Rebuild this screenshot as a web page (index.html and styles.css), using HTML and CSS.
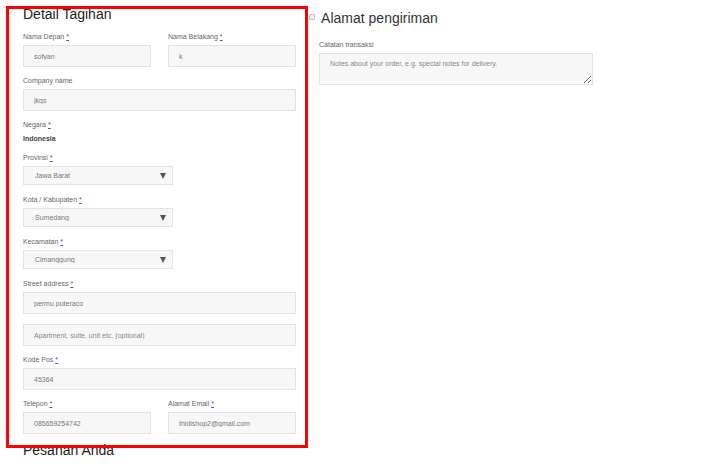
FILE: index.html
```html
<!DOCTYPE html>
<html>
<head>
  <title>Checkout</title>
  <link rel="stylesheet" href="styles.css">
</head>
<body>
  <div class="checkout">
    <div class="col-billing">
      <h3 class="section-title">Detail Tagihan</h3>

      <div class="row">
        <div class="field">
          <label>Nama Depan <a class="req">*</a></label>
          <input class="text" type="text" value="sofyan">
        </div>
        <div class="field">
          <label>Nama Belakang <a class="req">*</a></label>
          <input class="text" type="text" value="k">
        </div>
      </div>

      <div class="field">
        <label>Company name</label>
        <input class="text" type="text" value="jkgs">
      </div>

      <div class="field country">
        <label>Negara <a class="req">*</a></label>
        <strong>Indonesia</strong>
      </div>

      <div class="field select-field">
        <label>Provinsi <a class="req">*</a></label>
        <div class="select"><select><option>Jawa Barat</option></select></div>
      </div>

      <div class="field select-field">
        <label>Kota / Kabupaten <a class="req">*</a></label>
        <div class="select"><select><option>Sumedang</option></select></div>
      </div>

      <div class="field select-field">
        <label>Kecamatan <a class="req">*</a></label>
        <div class="select"><select><option>Cimanggung</option></select></div>
      </div>

      <div class="field">
        <label>Street address <a class="req">*</a></label>
        <input class="text" type="text" value="permu puteraco">
        <input class="text second" type="text" placeholder="Apartment, suite, unit etc. (optional)">
      </div>

      <div class="field">
        <label>Kode Pos <a class="req">*</a></label>
        <input class="text" type="text" value="45364">
      </div>

      <div class="row">
        <div class="field">
          <label>Telepon <a class="req">*</a></label>
          <input class="text" type="text" value="085659254742">
        </div>
        <div class="field">
          <label>Alamat Email <a class="req">*</a></label>
          <input class="text" type="text" value="thidishop2@gmail.com">
        </div>
      </div>

      <h3 class="section-title order-title">Pesanan Anda</h3>
    </div>

    <div class="col-shipping">
      <h3 class="section-title ship-title"><input class="ship-check" type="checkbox"> Alamat pengiriman</h3>
      <div class="field">
        <label>Catatan transaksi</label>
        <textarea placeholder="Notes about your order, e.g. special notes for delivery."></textarea>
      </div>
    </div>
  </div>

  <!-- highlight box drawn over the billing form -->
  <div class="highlight"></div>
</body>
</html>
```

FILE: styles.css
```css
body {
  margin: 0;
  font-family: "Liberation Sans", Arial, sans-serif;
  color: #666;
  background: #fff;
}

.checkout {
  display: flex;
  padding: 6px 0 0 23px;
}

.col-billing {
  width: 273px;
}

.col-shipping {
  width: 274px;
  margin-left: 23px;
}

.section-title {
  font-size: 14px;
  line-height: 16px;
  font-weight: normal;
  color: #222;
  margin: 0 0 10px;
}

.order-title {
  margin: -1px 0 0;
}

.row {
  display: flex;
  justify-content: space-between;
}

.row .field {
  width: 128px;
}

.field {
  margin-bottom: 9px;
}

.field label {
  display: block;
  font-size: 7px;
  line-height: 9px;
  margin-bottom: 4px;
  color: #666;
}

.req {
  color: #3a4fc4;
  text-decoration: underline;
}

input.text {
  display: block;
  box-sizing: border-box;
  width: 100%;
  height: 22px;
  margin: 0;
  padding: 0 10px;
  font-family: inherit;
  font-size: 7px;
  color: #777;
  background: #f7f7f7;
  border: 1px solid #e3e3e3;
  outline: none;
}

input.text::placeholder {
  color: #888;
}

input.second {
  margin-top: 10px;
}

.country strong {
  display: block;
  margin-top: 5px;
  font-size: 7px;
  line-height: 9px;
  color: #444;
}

.country {
  margin-bottom: 10px;
}

.select-field {
  margin-bottom: 10px;
}

.select {
  position: relative;
  width: 150px;
}

.select select {
  display: block;
  box-sizing: border-box;
  width: 100%;
  height: 19px;
  padding: 0 0 0 11px;
  font-family: inherit;
  font-size: 7px;
  color: #777;
  background: #f7f7f7;
  border: 1px solid #e3e3e3;
  border-radius: 0;
  appearance: none;
  -webkit-appearance: none;
  outline: none;
}

.select::after {
  content: "";
  position: absolute;
  right: 7px;
  top: 7px;
  border-left: 3px solid transparent;
  border-right: 3px solid transparent;
  border-top: 6px solid #555;
}

.ship-title {
  margin: 4px 0 14px;
  color: #333;
}

.ship-check {
  appearance: none;
  -webkit-appearance: none;
  display: inline-block;
  box-sizing: border-box;
  width: 6px;
  height: 6px;
  margin: 0 3px 0 -10px;
  vertical-align: 3px;
  background: #eee;
  border: 1px solid #c4c4c4;
  border-radius: 1px;
}

textarea {
  display: block;
  box-sizing: border-box;
  width: 100%;
  height: 32px;
  margin: 0;
  padding: 6px 10px;
  font-family: inherit;
  font-size: 7px;
  color: #777;
  background: #f7f7f7;
  border: 1px solid #e3e3e3;
  resize: both;
  outline: none;
}

textarea::placeholder {
  color: #888;
}

.highlight {
  position: absolute;
  left: 6px;
  top: 6px;
  width: 302px;
  height: 442px;
  box-sizing: border-box;
  border: 3px solid #f00;
  pointer-events: none;
}
```
